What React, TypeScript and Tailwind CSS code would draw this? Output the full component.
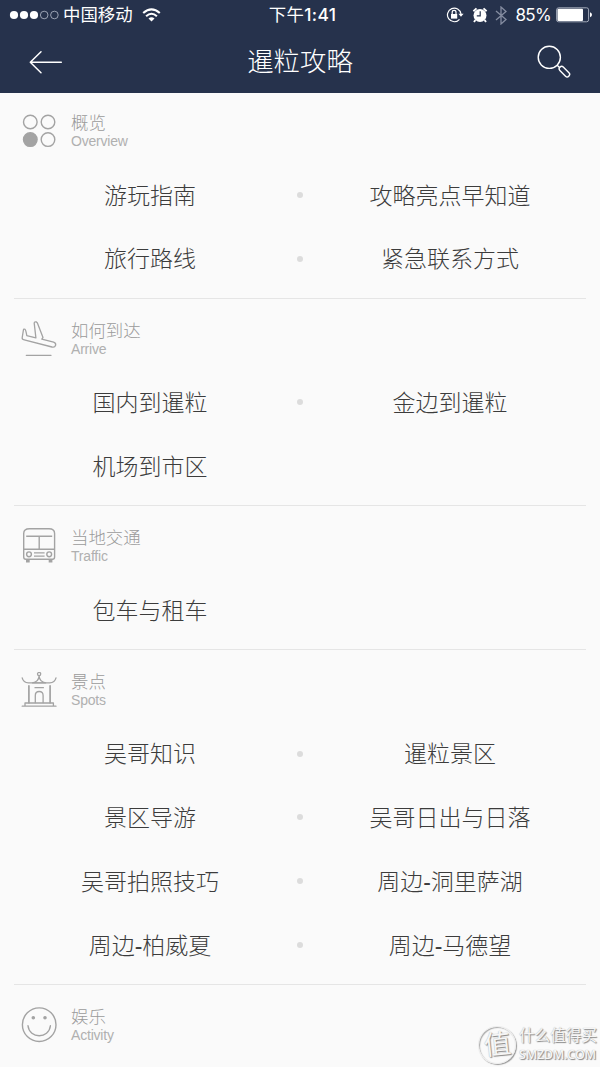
import type { ReactNode } from 'react';

type Section = {
  title: string;
  subtitle: string;
  icon: ReactNode;
  rows: string[][];
};

const OverviewIcon = () => (
  <svg width="36" height="36" viewBox="0 0 36 36" fill="none" stroke="#a3a3a3" strokeWidth="1.4">
    <circle cx="9.3" cy="9" r="6.8" />
    <circle cx="27" cy="9" r="6.8" />
    <circle cx="9.3" cy="26.6" r="6.8" fill="#a3a3a3" />
    <circle cx="27" cy="26.6" r="6.8" />
  </svg>
);

const ArriveIcon = () => (
  <svg width="36" height="36" viewBox="0 0 36 36" fill="none" stroke="#a3a3a3" strokeWidth="1.3" strokeLinecap="round" strokeLinejoin="round">
    <path d="M1.2 16.6 2.4 9.2Q2.7 7.6 4 8.3Q4.8 8.8 5.8 14.6L14.9 16.8 13.2 2.2Q13.2.5 15.4 1L16.4 2 22 16.4 20.8 18.2 32.6 21.2Q35.2 22.2 34.6 24.2Q33.8 26.8 31 26L3.3 18.9Q.8 18.3 1.2 16.6Z" />
    <path d="M5.3 34.3H30" />
  </svg>
);

const TrafficIcon = () => (
  <svg width="36" height="36" viewBox="0 0 36 36" fill="none" stroke="#a3a3a3" strokeWidth="1.4">
    <path d="M2.7 29V5.5Q2.7.7 8.5.7H28Q33.6.7 33.6 5.5V29Q33.6 31.2 31.5 31.2H4.8Q2.7 31.2 2.7 29" />
    <path d="M5.2 8.3H31.2M18.2 8.3V21.2M2.7 21.2H33.6M13 24.9H23.6M13 28.1H23.6" />
    <circle cx="8" cy="26.3" r="2.4" />
    <circle cx="28.2" cy="26.3" r="2.4" />
    <path d="M5 33H8.7M27.7 33H31.4" strokeWidth="3" />
  </svg>
);

const SpotsIcon = () => (
  <svg width="36" height="36" viewBox="0 0 36 36" fill="none" stroke="#a3a3a3" strokeWidth="1.3" strokeLinecap="round" strokeLinejoin="round">
    <circle cx="18.1" cy="2" r="1.6" />
    <path d="M18.1 4C17.8 7.7 16 10.1 11.5 10.8H24.7C20.2 10.1 18.4 7.7 18.1 4Z" />
    <path d="M1.2 5.9C2 9.2 4 10.8 7.5 10.8H28.7C32.2 10.8 34.2 9.2 35 5.9" />
    <path d="M7.9 13.8V30.7M29.1 13.8V30.7" strokeWidth="1.7" />
    <path d="M14 15.7H22.4M14.3 30.7V23.5Q14.3 19.5 18.2 19.5T22.1 23.5V30.7" />
    <path d="M4 33.5V31H32.4V33.5M1.2 34.2H35" />
  </svg>
);

const ActivityIcon = () => (
  <svg width="36" height="36" viewBox="0 0 36 36" fill="none" stroke="#a3a3a3" strokeWidth="1.4" strokeLinecap="round">
    <circle cx="18.2" cy="17.7" r="16.8" />
    <path d="M7 18.7C8.4 32 28 32 29.4 18.7" />
    <circle cx="12.3" cy="10.8" r="1.1" fill="#a3a3a3" />
    <circle cx="24" cy="10.8" r="1.1" fill="#a3a3a3" />
  </svg>
);

const sections: Section[] = [
  {
    title: '概览',
    subtitle: 'Overview',
    icon: <OverviewIcon />,
    rows: [
      ['游玩指南', '攻略亮点早知道'],
      ['旅行路线', '紧急联系方式'],
    ],
  },
  {
    title: '如何到达',
    subtitle: 'Arrive',
    icon: <ArriveIcon />,
    rows: [['国内到暹粒', '金边到暹粒'], ['机场到市区']],
  },
  {
    title: '当地交通',
    subtitle: 'Traffic',
    icon: <TrafficIcon />,
    rows: [['包车与租车']],
  },
  {
    title: '景点',
    subtitle: 'Spots',
    icon: <SpotsIcon />,
    rows: [
      ['吴哥知识', '暹粒景区'],
      ['景区导游', '吴哥日出与日落'],
      ['吴哥拍照技巧', '周边-洞里萨湖'],
      ['周边-柏威夏', '周边-马德望'],
    ],
  },
  {
    title: '娱乐',
    subtitle: 'Activity',
    icon: <ActivityIcon />,
    rows: [],
  },
];

function StatusBar() {
  return (
    <div className="grid h-[30px] grid-cols-[1fr_auto_1fr] items-center pl-[9px] pr-[8px] font-['Inter','Noto_Sans_CJK_SC',sans-serif] text-[17.4px] leading-[30px]">
      <div className="flex items-center">
        <svg width="50" height="10" viewBox="0 0 50 10" fill="#fff">
          <circle cx="5" cy="5" r="4.1" />
          <circle cx="15" cy="5" r="4.1" />
          <circle cx="25" cy="5" r="4.1" />
          <circle cx="35.2" cy="5" r="3.8" fill="none" stroke="#b6bccb" strokeWidth=".8" />
          <circle cx="45.4" cy="5" r="3.8" fill="none" stroke="#b6bccb" strokeWidth=".8" />
        </svg>
        <span className="ml-[4px]">中国移动</span>
        <svg className="ml-[9px]" width="19" height="14" viewBox="0 0 19 14" fill="none" stroke="#fff" strokeWidth="2.1">
          <path d="M1.2 5.1Q9.5-2.5 17.8 5.1" />
          <path d="M4.1 8.2Q9.5 3.3 14.9 8.2" />
          <path d="M6.5 10.5Q9.5 7.8 12.5 10.5L9.5 13.6Z" fill="#fff" stroke="none" />
        </svg>
      </div>
      <div className="flex items-center pl-1 tracking-[0.35px]">
        <span>下午</span>
        <span className="font-medium">1:41</span>
      </div>
      <div className="flex items-center justify-end">
        <svg width="18" height="16" viewBox="0 0 18 16" fill="none" stroke="#fff" strokeWidth="1.2">
          <path d="M13.5 12.3A6.8 6.8 0 1 1 15 7" />
          <path d="M12.4 6.7H17.6L15 9.8Z" fill="#fff" stroke="none" />
          <rect x="5" y="7" width="6.2" height="4.6" fill="#fff" stroke="none" />
          <path d="M6.2 7V5.3A1.9 1.9 0 0 1 10 5.3V7" />
        </svg>
        <svg className="ml-[8px]" width="16" height="16" viewBox="0 0 16 16">
          <circle cx="8" cy="8.5" r="6.5" fill="#fff" />
          <path d="M1.4 4.2 4.5 1.4M14.6 4.2 11.5 1.4M3.4 13 2 15M12.6 13 14 15" stroke="#fff" strokeWidth="1.9" />
          <path d="M8.2 4.3V8.8H4.8" fill="none" stroke="#26324c" strokeWidth="1.2" />
        </svg>
        <svg className="ml-[7px]" width="12" height="19" viewBox="0 0 12 19" fill="none" stroke="#858da1" strokeWidth="1.3">
          <path d="M1 5 11 13.6 6 18V1L11 5.4 1 14" />
        </svg>
        <span className="ml-[9px] text-[17px] tracking-[-0.7px]">85%</span>
        <svg className="ml-[5px]" width="36" height="16" viewBox="0 0 36 16">
          <rect x=".6" y=".8" width="32" height="14" rx="2" fill="none" stroke="#a3aaba" />
          <rect x="1.5" y="1.7" width="25.5" height="12.2" rx="1" fill="#fff" />
          <path d="M34 5.3Q36 6 36 7.8T34 10.3Z" fill="#fff" />
        </svg>
      </div>
    </div>
  );
}

function TopBar() {
  return (
    <div className="flex h-[62px] items-center justify-between pl-[29px] pr-[29px]">
      <svg className="mt-[2px]" width="34" height="24" viewBox="0 0 34 24" fill="none" stroke="#fff" strokeWidth="1.5" strokeLinecap="round" strokeLinejoin="round">
        <path d="M32.3 12.3H1.3M12 1.7 1.3 12.3 12 22.7" />
      </svg>
      <h1 className="pt-[2px] text-[26.4px] leading-[60px] font-light">暹粒攻略</h1>
      <svg className="mt-px" width="34" height="34" viewBox="0 0 34 34" fill="none" stroke="#fff" strokeWidth="1.4">
        <circle cx="12.3" cy="12.3" r="11.1" />
        <path d="M20.2 20.2 23 23" />
        <rect x="-2.2" y="0" width="4.8" height="12.6" rx="2.3" transform="translate(22.8 22.3) rotate(-45)" />
      </svg>
    </div>
  );
}

function SectionBlock({ title, subtitle, icon, rows }: Section) {
  return (
    <section className="mx-[14px] border-b border-[#e5e5e5] pb-[7px] last:border-0">
      <div className="flex h-[72px] items-start pt-[22px] pl-[7px]">
        {icon}
        <div className="ml-[14px]">
          <h2 className="text-[17.4px] leading-[20px] font-light text-[#9a9a9a]">{title}</h2>
          <p className="text-[14px] leading-[17px] tracking-[-0.2px] text-[#b0b0b0]">{subtitle}</p>
        </div>
      </div>
      {rows.map(([left, right]) => (
        <div key={left} className="-mx-[11px] grid h-[63.75px] grid-cols-[1fr_6px_1fr] items-center text-center text-[23px] font-light text-[#3c3c3c]">
          <span className="pt-[2px]">{left}</span>
          {right && <i className="h-[6px] w-[6px] rounded-full bg-[#dcdcdc]" />}
          {right && <span className="pt-[2px]">{right}</span>}
        </div>
      ))}
    </section>
  );
}

function Watermark() {
  return (
    <div className="absolute right-[3px] bottom-[3px] flex items-center gap-[3px] text-[#f6f6f6] [text-shadow:1px_1px_1px_#888,0_0_1px_#aaa]">
      <div className="flex h-[38px] w-[38px] items-center justify-center rounded-full border border-[#ededed] text-[27px] leading-none shadow-[1px_1px_1px_#999,inset_1px_1px_1px_#aaa]">
        <span className="-rotate-6">值</span>
      </div>
      <div>
        <div className="text-[15.6px] leading-[20px]">什么值得买</div>
        <div className="font-['Open_Sans',sans-serif] text-[12.5px] leading-[18px] font-semibold tracking-[-0.25px]">SMZDM.COM</div>
      </div>
    </div>
  );
}

export default function App() {
  return (
    <div className="relative h-[1067px] w-[600px] overflow-hidden bg-[#fafafa] font-['Liberation_Sans','Noto_Sans_CJK_SC',sans-serif]">
      <header className="h-[93px] bg-[#26324c] text-white">
        <StatusBar />
        <TopBar />
      </header>
      <main className="-mt-[2px]">
        {sections.map((section) => (
          <SectionBlock key={section.subtitle} {...section} />
        ))}
      </main>
      <Watermark />
    </div>
  );
}
